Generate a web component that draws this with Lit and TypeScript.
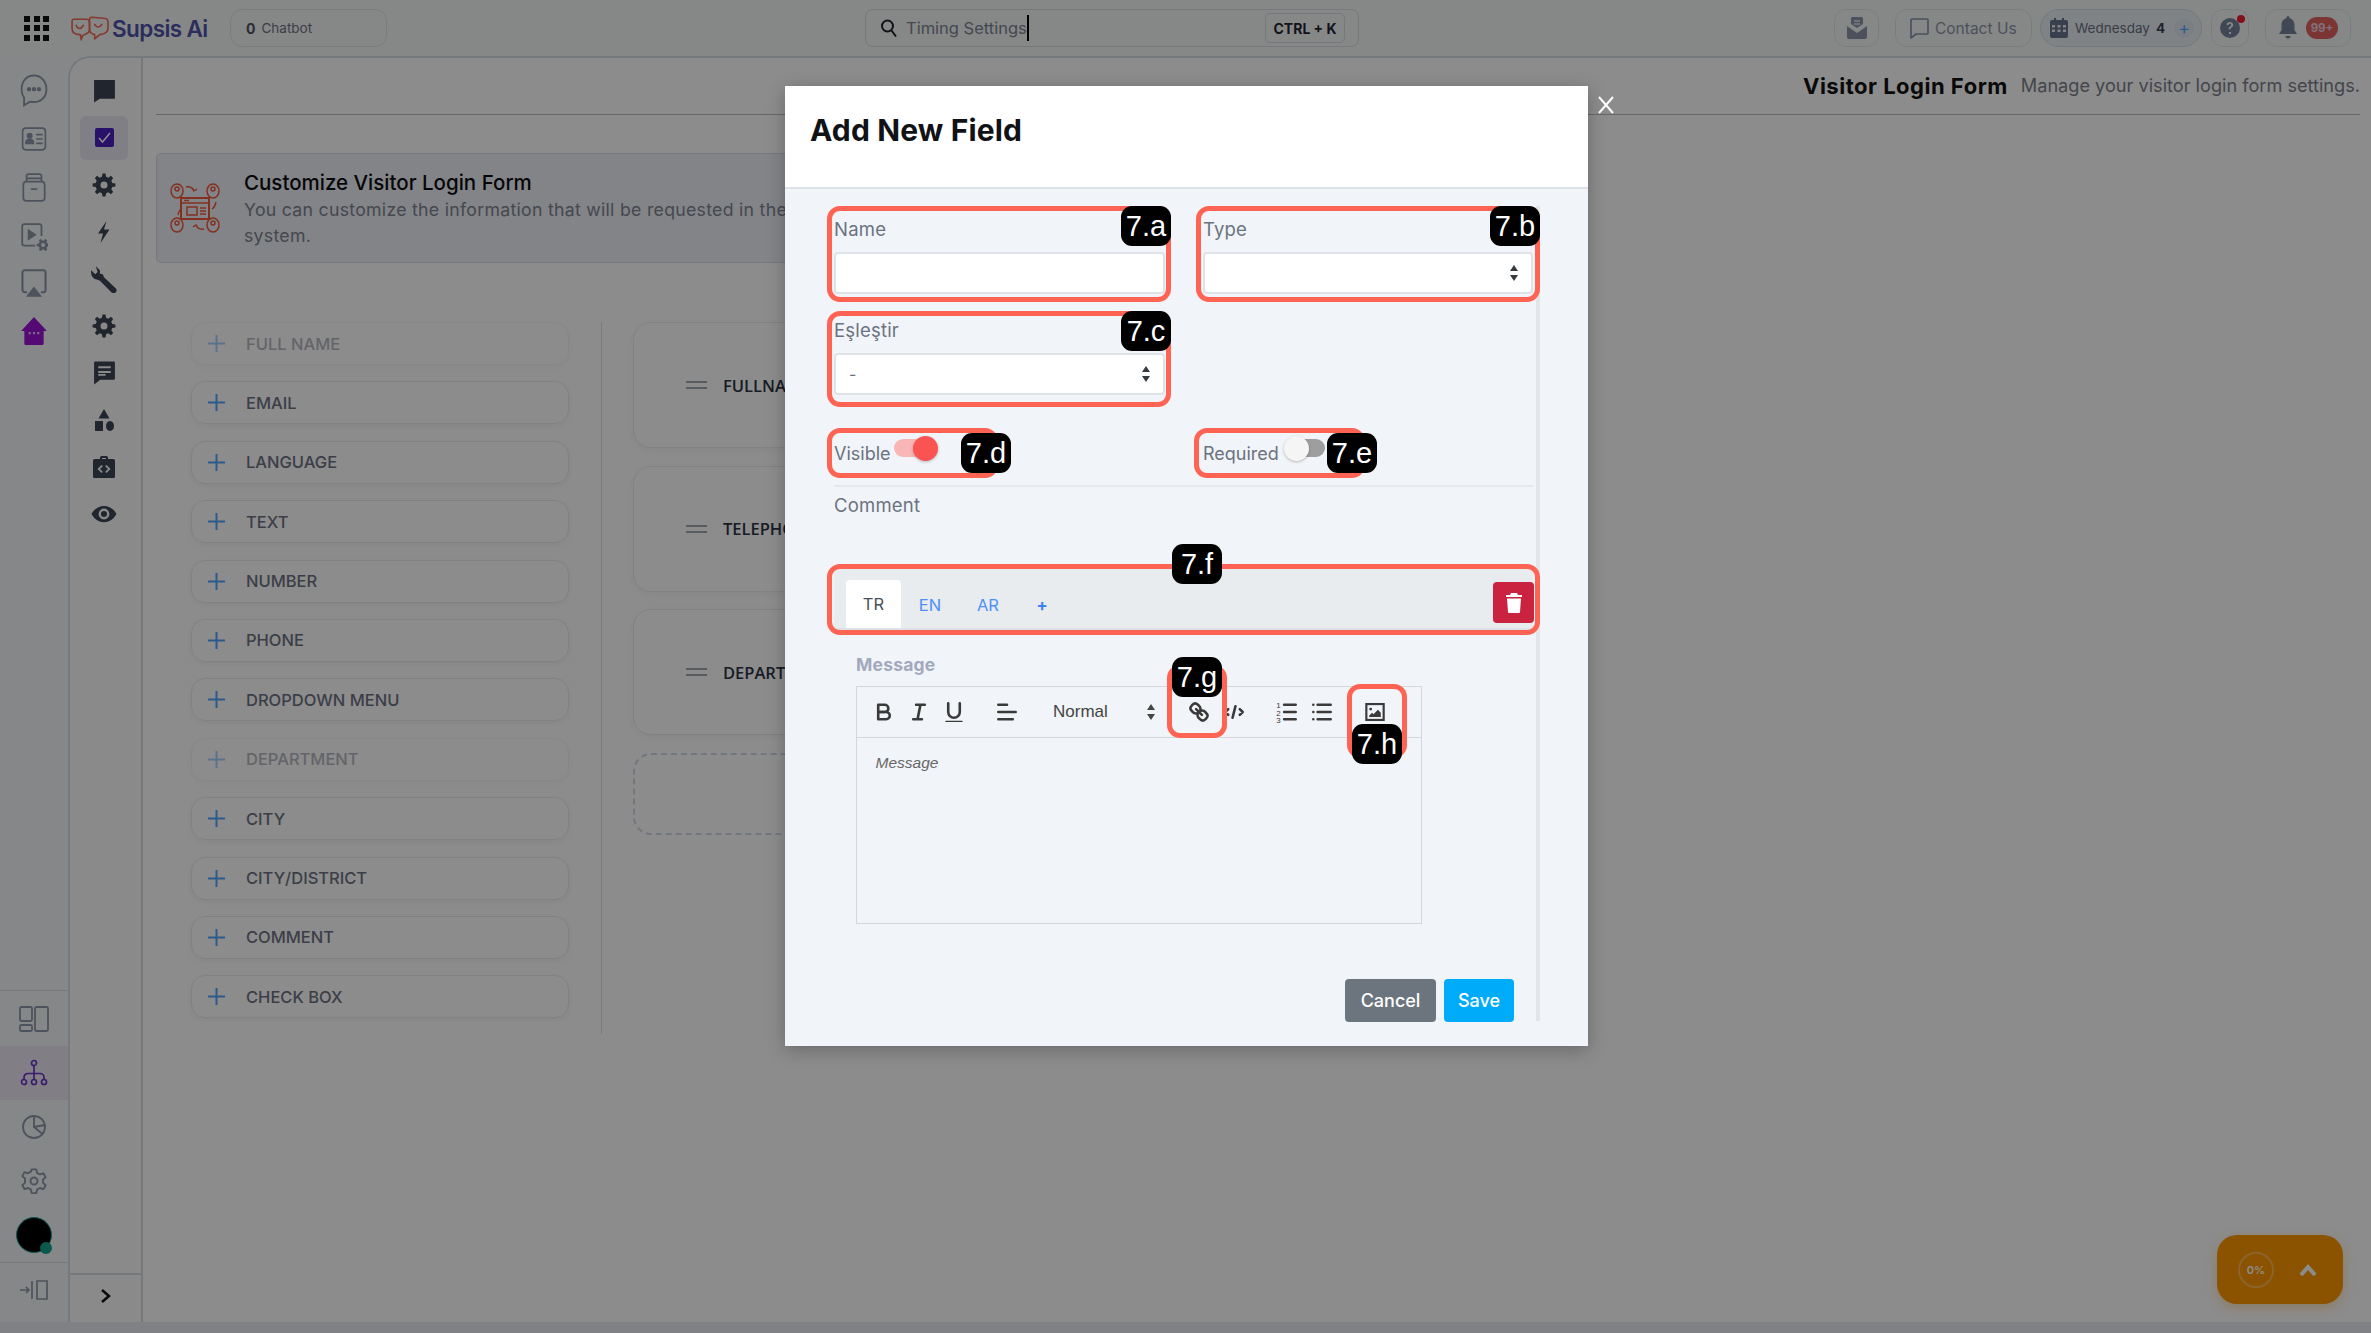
import { LitElement, html, svg, css } from 'lit';
import { customElement } from 'lit/decorators.js';

// builds a filled cog with a round hole, in a 24x24 box
const gearPath = (teeth: number, outer: number, inner: number, hole: number) => {
  const points: string[] = [];
  const step = (Math.PI * 2) / teeth;
  for (let i = 0; i < teeth; i++) {
    const a = i * step;
    [[-0.32, inner], [-0.17, outer], [0.17, outer], [0.32, inner]].forEach(([k, r]) => {
      const angle = a + k * step;
      points.push(`${(12 + r * Math.cos(angle)).toFixed(2)} ${(12 + r * Math.sin(angle)).toFixed(2)}`);
    });
  }
  return `M${points.join('L')}Z M${12 - hole} 12a${hole} ${hole} 0 1 0 ${hole * 2} 0a${hole} ${hole} 0 1 0 ${-hole * 2} 0Z`;
};

const solid = (d: string, size = 24) => html`<svg width=${size} height=${size} viewBox="0 0 24 24" fill="currentColor" fill-rule="evenodd"><path d=${d}></path></svg>`;
const quill = (body: unknown) => html`<svg class="ql" width="26" height="26" viewBox="0 0 18 18" fill="none" stroke="currentColor" stroke-width="1.800" stroke-linecap="round" stroke-linejoin="round">${body}</svg>`;

const stepper = html`<svg class="stepper" width="10" height="18" viewBox="0 0 10 18" fill="currentColor"><path d="M5 1l4 6H1zM5 17l-4-6h8z"></path></svg>`;

const railOneTop = [
  html`<svg width="30" height="36" viewBox="0 0 24 29" fill="none" stroke="currentColor" stroke-width="1.5"><path d="M12 2C6 2 2 6.500 2 13c0 3 1 5.500 2 7v6l5-3c1 .3 2 .4 3 .4 6 0 10-4.400 10-10.400S18 2 12 2z"></path><circle cx="8" cy="13" r="1" fill="currentColor"></circle><circle cx="12" cy="13" r="1" fill="currentColor"></circle><circle cx="16" cy="13" r="1" fill="currentColor"></circle></svg>`,
  html`<svg width="26" height="26" viewBox="0 0 24 24" fill="none" stroke="currentColor" stroke-width="1.500"><rect x="1.500" y="2" width="21" height="20" rx="3"></rect><circle cx="8" cy="9" r="2" fill="currentColor"></circle><path d="M4.500 16c0-5 7-5 7 0z" fill="currentColor"></path><path d="M14 8h6M14 12h6M14 16h6"></path></svg>`,
  html`<svg width="26" height="32" viewBox="0 0 24 30" fill="none" stroke="currentColor" stroke-width="1.600"><path d="M2 13a3 3 0 0 1 3-3h14a3 3 0 0 1 3 3v12a3 3 0 0 1-3 3H5a3 3 0 0 1-3-3z"></path><path d="M5 10V5a2 2 0 0 1 2-2h10a2 2 0 0 1 2 2v5M5 7h14M9 17h6"></path></svg>`,
  html`<svg class="nudge" width="28" height="30" viewBox="0 0 26 28" fill="none" stroke="currentColor" stroke-width="1.700"><path d="M14 22H4a2 2 0 0 1-2-2V4a2 2 0 0 1 2-2h14a2 2 0 0 1 2 2v9"></path><path d="M8 8l6 4-6 4z" fill="currentColor"></path><path d=${gearPath(6, 6, 4.200, 1.800)} transform="translate(9.500 9.500)" fill="currentColor" fill-rule="evenodd" stroke="none"></path></svg>`,
  html`<svg width="28" height="30" viewBox="0 0 24 26" fill="none" stroke="currentColor" stroke-width="1.800"><path d="M6 21H4a2 2 0 0 1-2-2V4a2 2 0 0 1 2-2h16a2 2 0 0 1 2 2v15a2 2 0 0 1-2 2h-2"></path><path d="M12 16l7 9H5z" fill="currentColor" stroke="none"></path></svg>`,
  html`<svg class="house" width="26" height="30" viewBox="0 0 24 28" fill="currentColor"><path d="M12 1l12 13h-3v12a1 1 0 0 1-1 1H4a1 1 0 0 1-1-1V14H0z"></path><path d="M7 16h2M11 16h2M15 16h2" stroke="#d7c7f0" stroke-width="2"></path></svg>`,
];

const railOneBottom = [
  html`<svg width="30" height="28" viewBox="0 0 30 28" fill="none" stroke="currentColor" stroke-width="1.800"><rect x="1" y="2" width="12" height="14" rx="1.500"></rect><rect x="1" y="20" width="12" height="6" rx="1.500"></rect><rect x="16" y="2" width="13" height="24" rx="1.500"></rect></svg>`,
  html`<svg width="28" height="28" viewBox="0 0 28 28" fill="none" stroke="currentColor" stroke-width="1.700"><circle cx="14" cy="4" r="2.500"></circle><circle cx="4" cy="23" r="2.500"></circle><circle cx="14" cy="23" r="2.500"></circle><circle cx="24" cy="23" r="2.500"></circle><path d="M14 6.500v14M4 20.500v-2a4 4 0 0 1 4-4h12a4 4 0 0 1 4 4v2"></path></svg>`,
  html`<svg width="28" height="28" viewBox="0 0 28 28" fill="none" stroke="currentColor" stroke-width="1.800"><circle cx="14" cy="14" r="11"></circle><path d="M14 3v11l8.500 7M14 14l11-2"></path></svg>`,
  html`<svg width="28" height="28" viewBox="0 0 24 24" fill="none" stroke="currentColor" stroke-width="1.600" stroke-linejoin="round"><circle cx="12" cy="12" r="3"></circle><path d="M10 2h4l.6 3 2.500 1.400 2.900-1 2 3.400-2.300 2 .1 2.800 2.200 2-2 3.400-2.900-1-2.500 1.400-.6 3h-4l-.6-3-2.500-1.400-2.900 1-2-3.400 2.300-2V9.800L1.900 7.800l2-3.400 2.900 1 2.500-1.400z"></path></svg>`,
];

const railTwo = [
  solid('M2.500 2h19a.5.5 0 0 1 .5.500v17a.5.5 0 0 1-.5.500H7.500L2 23.500V2.500a.5.5 0 0 1 .5-.500z', 25),
  html`<svg class="check" width="21" height="21" viewBox="0 0 21 21"><rect x="1" y="1" width="19" height="19" rx="2" fill="currentColor"></rect><path d="M5 11l3.500 4L16 6" fill="none" stroke="#fff" stroke-width="1.500"></path></svg>`,
  solid(gearPath(8, 11.500, 8.500, 3.500), 24),
  solid('M14.500 1L6 13.500h5L8.500 23l9-13.500h-5.500z', 24),
  solid('M5 1l3.500 3.500v3L11 8l1 2.500 10 9.500a2.400 2.400 0 0 1-3.500 3.500L8.500 13.500l-2.500-1C2.500 12 .5 9 1 4.500l3.500 3.500 2-2z', 28),
  solid(gearPath(8, 11.500, 8.500, 3.500), 24),
  solid('M3 1.500h18a1 1 0 0 1 1 1V18a1 1 0 0 1-1 1H8l-6 4.500V2.500a1 1 0 0 1 1-1zM6 6v2h12V6zm0 4.500v2h12v-2zM6 15h7v-1.500H6z', 25),
  solid('M12 1l5.500 9.500h-11zM3 13h8v10H3zM18 13c2.500 0 4 2.200 4 5s-1.500 5-4 5-4-2.200-4-5 1.500-5 4-5z', 24),
  solid('M8 4V2.500A1.500 1.500 0 0 1 9.500 1h5A1.500 1.500 0 0 1 16 2.500V4h5.500A1.500 1.500 0 0 1 23 5.500v16a1.500 1.500 0 0 1-1.500 1.500h-19A1.500 1.500 0 0 1 1 21.500v-16A1.500 1.500 0 0 1 2.500 4zm2-1v1h4V3zM9.500 10L5.500 14l4 4 1.300-1.300L8 14l2.800-2.700zm5 0l-1.300 1.300L16 14l-2.800 2.700 1.300 1.300 4-4z', 24),
  solid('M12 4.500C6.500 4.500 2.500 8 .5 12c2 4 6 7.500 11.500 7.500S21.500 16 23.500 12c-2-4-6-7.500-11.500-7.500zM12 7a5 5 0 1 1 0 10 5 5 0 0 1 0-10zm0 2.200a2.800 2.800 0 1 0 0 5.600 2.800 2.800 0 0 0 0-5.600z', 26),
];

const fields = ['FULL NAME', 'EMAIL', 'LANGUAGE', 'TEXT', 'NUMBER', 'PHONE', 'DROPDOWN MENU', 'DEPARTMENT', 'CITY', 'CITY/DISTRICT', 'COMMENT', 'CHECK BOX'];
const usedFields = ['FULL NAME', 'DEPARTMENT'];
const formCards = ['FULLNAME', 'TELEPHONE', 'DEPARTMENT'];

// numbered call-outs laid over the modal, page coordinates minus the modal origin
const modalX = 785;
const modalY = 86;
const callouts = [
  { label: '7.a', box: [827, 206, 344, 96], badge: [1121, 206] },
  { label: '7.b', box: [1196, 206, 344, 96], badge: [1490, 206] },
  { label: '7.c', box: [827, 311, 344, 96], badge: [1121, 311] },
  { label: '7.d', box: [827, 428, 171, 50], badge: [961, 433] },
  { label: '7.e', box: [1194, 428, 171, 50], badge: [1327, 433] },
  { label: '7.f', box: [827, 564, 713, 71], badge: [1172, 544] },
  { label: '7.g', box: [1167, 665, 60, 73], badge: [1172, 657] },
  { label: '7.h', box: [1347, 684, 60, 74], badge: [1352, 724] },
];

const toolbarGroups = [
  [
    quill(svg`<path d="M5,4H9.500A2.500,2.500,0,0,1,12,6.500v0A2.500,2.500,0,0,1,9.500,9H5A0,0,0,0,1,5,9V4A0,0,0,0,1,5,4Z"></path><path d="M5,9h5.500A2.500,2.500,0,0,1,13,11.500v0A2.500,2.500,0,0,1,10.500,14H5a0,0,0,0,1,0,0V9A0,0,0,0,1,5,9Z"></path>`),
    quill(svg`<path d="M7 4h6M5 14h6M8 14l2-10"></path>`),
    quill(svg`<path d="M5,3V9a4.012,4.012,0,0,0,4,4H9a4.012,4.012,0,0,0,4-4V3"></path><rect height="1" rx=".5" width="12" x="3" y="15" fill="currentColor" stroke="none"></rect>`),
  ],
  [quill(svg`<path d="M3 9h12M3 14h10M3 4h6"></path>`)],
];

const toolbarGroupsAfter = [
  [
    quill(svg`<path d="M7 7l4 4"></path><path d="M8.900,4.577a3.476,3.476,0,0,1,.36,4.679A3.476,3.476,0,0,1,4.577,8.900C3.185,7.500,2.035,6.400,4.217,4.217S7.500,3.185,8.900,4.577Z"></path><path d="M13.423,9.100a3.476,3.476,0,0,0-4.679-.36,3.476,3.476,0,0,0,.36,4.679c1.392,1.392,2.500,2.542,4.679.36S14.815,10.500,13.423,9.100Z"></path>`),
    quill(svg`<path d="M5 7L3 9l2 2M13 7l2 2-2 2M10 5L8 13"></path>`),
  ],
  [
    quill(svg`<path d="M7 4h8M7 9h8M7 14h8"></path><text x="1.500" y="6.500" font-size="5.500" fill="currentColor" stroke="none" font-family="Liberation Sans">1</text><text x="1.500" y="11.500" font-size="5.500" fill="currentColor" stroke="none" font-family="Liberation Sans">2</text><text x="1.500" y="16.500" font-size="5.500" fill="currentColor" stroke="none" font-family="Liberation Sans">3</text>`),
    quill(svg`<path d="M6 4h9M6 9h9M6 14h9M3 4h0M3 9h0M3 14h0"></path>`),
  ],
  [
    html`<svg class="ql" width="26" height="26" viewBox="0 0 18 18" fill="none" stroke="currentColor" stroke-width="1.500"><rect height="11" width="12" x="3" y="3.500"></rect><circle cx="6" cy="7" r="1" fill="currentColor" stroke="none"></circle><path d="M5 12.500v-1l2-2 1 1 3-3 2 2v3z" fill="currentColor" stroke="none"></path></svg>`,
  ],
];

@customElement('app-root')
export class AppRoot extends LitElement {
  static styles = css`
    :host {
      display: block;
      width: 2371px;
      height: 1333px;
      position: relative;
      overflow: hidden;
      font-family: Inter, "Liberation Sans", sans-serif;
      color: #6d7282;
    }

    .page {
      display: flex;
      flex-direction: column;
      height: 1333px;
      background: #f5f7f8;
    }

    /* top bar */
    .topbar {
      display: flex;
      align-items: center;
      height: 56px;
      flex: none;
      padding: 0 20px 0 24px;
    }

    .waffle {
      display: grid;
      grid-template-columns: repeat(3, 6px);
      gap: 3.500px;
      width: 25px;
      flex: none;
    }

    .waffle i {
      height: 6px;
      background: #111;
    }

    .logo {
      display: flex;
      align-items: center;
      width: 138px;
      flex: none;
      margin-left: 21px;
    }

    .logo span {
      font-size: 22.500px;
      font-weight: 600;
      color: #4f52a8;
      margin-left: 3px;
      letter-spacing: -0.6px;
    }

    .tool {
      display: flex;
      align-items: center;
      height: 38px;
      box-sizing: border-box;
      border: 1.500px solid #dfe4e9;
      border-radius: 12px;
      flex: none;
    }

    .chatbot {
      width: 157px;
      margin-left: 22px;
      padding-left: 15px;
      font-size: 13.500px;
    }

    .chatbot b {
      font-size: 14px;
      margin-right: 6px;
      color: #4d5360;
    }

    .search {
      width: 494px;
      margin-left: 478px;
      padding: 0 13px 0 14px;
      border-color: #d5dce2;
      border-radius: 8px;
      font-size: 16.500px;
      color: #7d8391;
    }

    .search svg {
      color: #1d2128;
      margin-right: 8px;
    }

    .search .caret {
      width: 2px;
      height: 26px;
      background: #000;
      margin-left: 0;
    }

    .search kbd {
      margin-left: auto;
      width: 80px;
      height: 30px;
      box-sizing: border-box;
      border: 1.500px solid #d5dce2;
      border-radius: 5px;
      display: flex;
      align-items: center;
      justify-content: center;
      font: 700 14px Inter, sans-serif;
      color: #1f2530;
    }

    .right-tools {
      display: flex;
      align-items: center;
      margin-left: auto;
    }

    .mail {
      width: 45px;
      justify-content: center;
      color: #8a94a8;
    }

    .contact {
      width: 137px;
      margin-left: 16px;
      padding-left: 14px;
      font-size: 15.500px;
      color: #8d93a3;
      gap: 6px;
    }

    .contact svg {
      color: #8a94a8;
    }

    .date {
      width: 162px;
      margin-left: 8px;
      padding-left: 9px;
      border-radius: 19px;
      background: #eaeff4;
      border-color: #d3dae2;
      font-size: 13.500px;
      color: #68707f;
    }

    .date svg {
      color: #68758c;
      margin-right: 7px;
    }

    .date b {
      color: #3a4150;
      margin-left: 6px;
    }

    .date .add {
      width: 20px;
      height: 20px;
      margin-left: 9px;
      border-radius: 50%;
      background: #dfe7f0;
      display: flex;
      align-items: center;
      justify-content: center;
      color: #4ea5ff;
      font-size: 17px;
    }

    .help {
      position: relative;
      width: 38px;
      margin-left: 9px;
      justify-content: center;
      color: #76839c;
    }

    .help::after {
      content: "";
      position: absolute;
      left: 25px;
      top: 5px;
      width: 8px;
      height: 8px;
      border-radius: 50%;
      background: #ef1d30;
    }

    .bell {
      width: 86px;
      margin-left: 16px;
      padding-left: 12px;
      color: #76839c;
      gap: 8px;
    }

    .bell span {
      width: 32px;
      height: 22px;
      border-radius: 11px;
      background: #e0635e;
      color: #ecd;
      font-size: 11.500px;
      font-weight: 700;
      display: flex;
      align-items: center;
      justify-content: center;
    }

    /* left rails */
    .main {
      display: flex;
      flex: 1;
      min-height: 0;
    }

    .rail-one {
      width: 68px;
      flex: none;
      display: flex;
      flex-direction: column;
      background: #f3f6f9;
      color: #8d97a8;
    }

    .rail-one .upper {
      padding-top: 11px;
    }

    .rail-one .slot {
      height: 48px;
      display: flex;
      align-items: center;
      justify-content: center;
    }

    .rail-one .slot svg.house {
      color: #9a12d4;
    }

    .rail-one .slot svg.nudge {
      margin-top: 4px;
    }

    .rail-one .lower {
      margin-top: auto;
      border-top: 1.500px solid #d5dce2;
    }

    .rail-one .lower .slot {
      height: 54px;
    }

    .rail-one .lower .slot:first-child {
      height: 55px;
    }

    .rail-one .lower .slot.active {
      background: #ece6f5;
      color: #6a35c9;
    }

    .avatar {
      position: relative;
      width: 36px;
      height: 36px;
      border-radius: 50%;
      background: #000;
      border: 1px solid #12a594;
      box-sizing: border-box;
    }

    .avatar::after {
      content: "";
      position: absolute;
      right: -1px;
      bottom: -2px;
      width: 12px;
      height: 12px;
      border-radius: 50%;
      background: #14a08e;
    }

    .rail-one .exit {
      height: 60px;
      border-top: 1.500px solid #d5dce2;
      display: flex;
      justify-content: center;
      padding-top: 16px;
      box-sizing: border-box;
    }

    .workspace {
      flex: 1;
      display: flex;
      min-width: 0;
      border-top: 2px solid #d5dce2;
      border-left: 2px solid #d5dce2;
      border-top-left-radius: 22px;
      background: #fff;
      overflow: hidden;
    }

    .rail-two {
      width: 71px;
      flex: none;
      display: flex;
      flex-direction: column;
      background: #fcfcfd;
      border-right: 2px solid #d5dce2;
      color: #3d4554;
    }

    .rail-two .items {
      padding: 10.500px 0 0 10px;
      display: flex;
      flex-direction: column;
      gap: 3px;
    }

    .rail-two .item {
      width: 48px;
      height: 44px;
      border-radius: 6px;
      display: flex;
      align-items: center;
      justify-content: center;
    }

    .rail-two .item.active {
      background: #ece7f4;
      color: #4a1fc0;
    }

    .rail-two .collapse {
      margin-top: auto;
      height: 49px;
      box-sizing: border-box;
      padding-bottom: 6px;
      border-top: 2px solid #d5dce2;
      display: flex;
      align-items: center;
      justify-content: center;
      color: #111;
    }

    /* page content */
    .content {
      flex: 1;
      min-width: 0;
      padding: 0 11px 0 13px;
    }

    .title-row {
      height: 57px;
      box-sizing: border-box;
      display: flex;
      align-items: center;
      justify-content: flex-end;
      border-bottom: 1.500px solid #b8bec4;
      gap: 13px;
    }

    .title-row h1 {
      margin: 0;
      font-size: 22px;
      font-weight: 700;
      color: #111;
      letter-spacing: 0.5px;
    }

    .title-row p {
      margin: -2px 0 0;
      font-size: 18.150px;
      color: #7b7f8a;
    }

    .info {
      display: flex;
      align-items: center;
      width: 1000px;
      height: 110px;
      box-sizing: border-box;
      margin-top: 38px;
      padding-left: 12px;
      background: #eef1f6;
      border: 1.500px solid #d3dae2;
      border-radius: 5px;
    }

    .info .art {
      flex: none;
      color: #f0583d;
      margin-right: 23px;
    }

    .info-text {
      padding-top: 3px;
    }

    .info h2 {
      margin: 0 0 2px;
      font-size: 20.500px;
      line-height: 25px;
      font-weight: 500;
      color: #0c0c10;
    }

    .info p {
      margin: 0;
      font-size: 17.700px;
      letter-spacing: 0.28px;
      line-height: 26px;
      color: #7d8391;
    }

    .builder {
      display: flex;
      margin-top: 59px;
      padding-left: 35px;
    }

    .field-list {
      width: 378px;
      height: 694px;
      padding: 0 32px 18px 0;
      border-right: 1.500px solid #dde1e5;
      display: flex;
      flex-direction: column;
      gap: 16.400px;
    }

    .field-item {
      height: 43px;
      flex: none;
      box-sizing: border-box;
      display: flex;
      align-items: center;
      border: 1.500px solid #e8ecee;
      border-radius: 14px;
      box-shadow: 0 2px 5px rgba(0, 0, 0, 0.05);
      padding-left: 16px;
      font-size: 16.500px;
      font-weight: 500;
    }

    .field-item.used {
      opacity: 0.5;
    }

    .field-item svg {
      color: #4ea5ff;
      margin-right: 21px;
    }

    .form-cards {
      width: 600px;
      margin-left: 31px;
      display: flex;
      flex-direction: column;
      gap: 17.500px;
    }

    .form-card {
      height: 126px;
      box-sizing: border-box;
      display: flex;
      align-items: center;
      border: 1.500px solid #e8ecee;
      border-radius: 18px;
      box-shadow: 0 2px 6px rgba(0, 0, 0, 0.05);
      padding-left: 52px;
      font: 600 16.500px "Open Sans", sans-serif;
      color: #2a3344;
    }

    .form-card i {
      width: 21px;
      height: 8px;
      margin-right: 16px;
      border-top: 2.500px solid #a3a8ae;
      border-bottom: 2.500px solid #a3a8ae;
      box-sizing: border-box;
    }

    .form-dropzone {
      height: 82px;
      box-sizing: border-box;
      border: 2px dashed #cfd9e8;
      border-radius: 18px;
    }

    .strip {
      height: 11px;
      flex: none;
      background: #e9ebf0;
    }

    .progress {
      position: absolute;
      left: 2217px;
      top: 1235px;
      width: 126px;
      height: 69px;
      border-radius: 20px;
      background: #fd9700;
      display: flex;
      align-items: center;
      padding-left: 21px;
      box-sizing: border-box;
      color: #fff;
      box-shadow: 0 4px 12px rgba(253, 151, 0, 0.3);
    }

    .progress .ring {
      width: 36px;
      height: 36px;
      box-sizing: border-box;
      border: 2.500px solid #ffb54a;
      border-radius: 50%;
      display: flex;
      align-items: center;
      justify-content: center;
      font-size: 11px;
      font-weight: 600;
      margin-right: 25px;
    }

    /* dimmed layer and modal */
    .backdrop {
      position: absolute;
      inset: 0;
      background: rgba(0, 0, 0, 0.45);
    }

    .close {
      position: absolute;
      left: 1598px;
      top: 96px;
      color: #fff;
    }

    .modal {
      position: absolute;
      left: 785px;
      top: 86px;
      width: 803px;
      height: 960px;
      background: #f1f4f8;
      border-radius: 4px 4px 0 0;
      box-shadow: 0 4px 18px rgba(0, 0, 0, 0.25);
      color: #6b7280;
    }

    .modal-head {
      height: 103px;
      box-sizing: border-box;
      background: #fff;
      border-bottom: 2px solid #dce2e8;
      display: flex;
      align-items: center;
      padding: 0 0 13px 25px;
    }

    .modal-head h3 {
      margin: 0;
      font-size: 30px;
      font-weight: 700;
      color: #101216;
      letter-spacing: 0.15px;
    }

    .modal-body {
      width: 706px;
      height: 815px;
      margin: 17px 0 0 49px;
      padding: 10px 3px 0 0;
      box-sizing: border-box;
      border-right: 4px solid #e3e6e9;
    }

    .form-grid {
      display: grid;
      grid-template-columns: 331px 330px;
      column-gap: 38px;
      row-gap: 23px;
    }

    .label {
      font-size: 18.500px;
      letter-spacing: 0.2px;
      line-height: 26px;
      height: 26px;
    }

    .control {
      height: 42px;
      margin-top: 10px;
      box-sizing: border-box;
      background: #fff;
      border: 2px solid #dfe3e8;
      border-radius: 4px;
      display: flex;
      align-items: center;
      justify-content: space-between;
      padding: 0 12px 0 13px;
      color: #6b7280;
    }

    .stepper {
      color: #343a40;
    }

    .toggles {
      display: grid;
      grid-template-columns: 331px 330px;
      column-gap: 38px;
      margin-top: 46px;
    }

    .toggle-field {
      display: flex;
    }

    .toggle-field .label {
      width: 60px;
      font-size: 18px;
      letter-spacing: 0;
    }

    .toggle-field.required .label {
      width: 84px;
    }

    .toggle {
      position: relative;
      width: 38px;
      height: 18px;
      margin-top: -2px;
      border-radius: 9px;
      background: #f9b6b6;
    }

    .toggle::after {
      content: "";
      position: absolute;
      left: 19px;
      top: -3px;
      width: 25px;
      height: 25px;
      border-radius: 50%;
      background: #fb5252;
      box-shadow: 0 1px 3px rgba(0, 0, 0, 0.25);
    }

    .toggle.off {
      background: #9e9e9e;
    }

    .toggle.off::after {
      left: -3px;
      background: #f5f5f5;
    }

    .rule {
      height: 2px;
      margin-top: 18px;
      background: #e6e9ec;
    }

    .comment {
      margin-top: 5px;
    }

    .tabs {
      display: flex;
      align-items: flex-end;
      height: 61px;
      box-sizing: border-box;
      margin-top: 51px;
      padding-left: 12px;
      background: #e9ecef;
      border-bottom: 2px solid #dee2e6;
      font-size: 16.500px;
      color: #4f8ff7;
    }

    .tab {
      height: 46px;
      display: flex;
      align-items: center;
      justify-content: center;
      padding-bottom: 1px;
      width: 58px;
      box-sizing: border-box;
    }

    .tab.active {
      width: 55px;
      color: #495057;
      background: #fff;
      border-radius: 4px 4px 0 0;
      height: 48px;
    }

    .tab.more {
      width: 50px;
      font-weight: 700;
      color: #3b82f6;
    }

    .trash {
      width: 41px;
      height: 41px;
      margin: 0 -1px 5px auto;
      border-radius: 4px;
      background: #c9233f;
      color: #fff;
      display: flex;
      align-items: center;
      justify-content: center;
    }

    .message {
      padding: 22px 0 0 22px;
    }

    .message-label {
      font-size: 17.500px;
      letter-spacing: 0.2px;
      line-height: 26px;
      font-weight: 700;
      color: #a3a9bd;
    }

    .editor {
      width: 566px;
      height: 238px;
      margin-top: 8px;
      box-sizing: border-box;
      border: 1.500px solid #d3d6da;
    }

    .ql-toolbar {
      height: 50px;
      box-sizing: content-box;
      border-bottom: 1.500px solid #d3d6da;
      display: flex;
      align-items: center;
      padding-left: 9px;
      color: #3a3a3a;
    }

    .ql-group {
      display: flex;
      margin-right: 18px;
    }

    .ql-button {
      width: 35px;
      display: flex;
      justify-content: center;
    }

    .ql-picker {
      width: 121px;
      margin-right: 18px;
      box-sizing: border-box;
      padding: 0 7px 0 11px;
      display: flex;
      align-items: center;
      justify-content: space-between;
      font: 17px "Liberation Sans", sans-serif;
      color: #444;
    }

    .ql-picker .stepper {
      color: #444;
    }

    .ql-placeholder {
      padding: 16px 18.500px;
      font: italic 15.500px "Liberation Sans", sans-serif;
      color: #666;
    }

    .actions {
      display: flex;
      justify-content: flex-end;
      gap: 8px;
      margin: 55px 19px 0 0;
    }

    .actions button {
      height: 43px;
      border: none;
      border-radius: 4px;
      color: #fff;
      font: 500 18px Inter, sans-serif;
      padding: 0;
    }

    .cancel {
      width: 91px;
      background: #6c757d;
    }

    .save {
      width: 70px;
      background: #00abf9;
    }

    /* numbered call-outs */
    .callout {
      position: absolute;
      box-sizing: border-box;
      border: 5px solid #ff6353;
      border-radius: 13px;
    }

    .badge {
      position: absolute;
      width: 50px;
      height: 40px;
      border-radius: 11px;
      background: #000;
      color: #fff;
      font: 29px "Liberation Sans", sans-serif;
      display: flex;
      align-items: center;
      justify-content: center;
    }
  `;

  renderTopbar() {
    return html`
      <header class="topbar">
        <div class="waffle">${Array.from({ length: 9 }, () => html`<i></i>`)}</div>
        <div class="logo">
          <svg width="39" height="29" viewBox="0 0 38 26" fill="none" stroke="#ef6a52" stroke-width="1.600" stroke-linejoin="round" stroke-linecap="round">
            <path d="M4 4h12q3 0 3 3v7q0 3-3 4l-4 2-1 4-1-5q-8 0-8-6V6q0-2 2-2z"></path>
            <path d="M21 2l12 1q4 0 4 4v6q0 5-8 6l-5 4 0-4q-5-1-5-6V5q0-3 2-3z"></path>
            <path d="M6 10q3 6 7 0M24 9q3 5 7 0"></path>
          </svg>
          <span>Supsis Ai</span>
        </div>
        <div class="tool chatbot"><b>0</b>Chatbot</div>
        <div class="tool search">
          <svg width="18" height="20" viewBox="0 0 18 20" fill="none" stroke="currentColor" stroke-width="2"><circle cx="7.500" cy="8" r="5.500"></circle><path d="M11.500 12.500l4.500 6"></path></svg>
          <span>Timing Settings</span><span class="caret"></span>
          <kbd>CTRL + K</kbd>
        </div>
        <div class="right-tools">
          <div class="tool mail">
            <svg width="22" height="24" viewBox="0 0 22 24" fill="currentColor"><path d="M5 8V2.500A1.500 1.500 0 0 1 6.500 1h9A1.500 1.500 0 0 1 17 2.500V8l-6 4z"></path><path d="M1 10l10 7 10-7v11a2 2 0 0 1-2 2H3a2 2 0 0 1-2-2z"></path><path d="M8 5h6M8 8h6" stroke="#dfe3ea" stroke-width="1.400"></path></svg>
          </div>
          <div class="tool contact">
            <svg width="19" height="22" viewBox="0 0 19 22" fill="none" stroke="currentColor" stroke-width="1.700" stroke-linejoin="round"><path d="M2 2h15a1 1 0 0 1 1 1v13a1 1 0 0 1-1 1H6l-5 4V3a1 1 0 0 1 1-1z"></path></svg>
            Contact Us
          </div>
          <div class="tool date">
            <svg width="18" height="20" viewBox="0 0 18 20" fill="currentColor" fill-rule="evenodd"><path d="M4 0h2v2h6V0h2v2h2a2 2 0 0 1 2 2v14a2 2 0 0 1-2 2H2a2 2 0 0 1-2-2V4a2 2 0 0 1 2-2h2zM2 7v2.500h3V7zm5.500 0v2.500h3V7zM13 7v2.500h3V7zM2 11.500V14h3v-2.500zm5.500 0V14h3v-2.500zm5.500 0V14h3v-2.500z"></path></svg>
            Wednesday<b>4</b><span class="add">+</span>
          </div>
          <div class="tool help">
            <svg width="20" height="24" viewBox="0 0 20 24" fill="currentColor" fill-rule="evenodd"><path d="M10 2a10 10 0 0 1 0 20 10 10 0 0 1 0-20zM9 16v2h2v-2zm1-10c-2 0-3.300 1-3.500 3h2c.1-.8.600-1.200 1.400-1.200s1.300.4 1.300 1.100c0 1.500-2.700 1.600-2.700 4.400h2c0-1.900 2.700-2 2.700-4.500C12.700 7 11.600 6 10 6z"></path></svg>
          </div>
          <div class="tool bell">
            <svg width="20" height="26" viewBox="0 0 20 26" fill="currentColor"><path d="M10 1a1.500 1.500 0 0 1 1.500 1.500v.8C15 4 16.500 7 16.500 10v5l2.500 4H1l2.500-4v-5C3.500 7 5 4 8.500 3.300v-.8A1.500 1.500 0 0 1 10 1zM7.500 21h5a2.500 2.500 0 0 1-5 0z"></path></svg>
            <span>99+</span>
          </div>
        </div>
      </header>
    `;
  }

  renderRails() {
    return html`
      <aside class="rail-one">
        <div class="upper">${railOneTop.map(icon => html`<div class="slot">${icon}</div>`)}</div>
        <div class="lower">
          ${railOneBottom.map((icon, i) => html`<div class="slot ${i === 1 ? 'active' : ''}">${icon}</div>`)}
          <div class="slot"><div class="avatar"></div></div>
          <div class="exit">
            <svg width="30" height="22" viewBox="0 0 30 22" fill="none" stroke="currentColor" stroke-width="1.700"><path d="M1 11h9M7 8l3 3-3 3M13 2v18M18 2h10v18H18z"></path></svg>
          </div>
        </div>
      </aside>
    `;
  }

  renderRailTwo() {
    return html`
      <aside class="rail-two">
        <div class="items">
          ${railTwo.map((icon, i) => html`<div class="item ${i === 1 ? 'active' : ''}">${icon}</div>`)}
        </div>
        <div class="collapse">
          <svg width="12" height="14" viewBox="0 0 12 14" fill="none" stroke="currentColor" stroke-width="2.500"><path d="M2 1l7 6-7 6"></path></svg>
        </div>
      </aside>
    `;
  }

  renderContent() {
    return html`
      <main class="content">
        <div class="title-row">
          <h1>Visitor Login Form</h1>
          <p>Manage your visitor login form settings.</p>
        </div>
        <section class="info">
          <svg class="art" width="52" height="52" viewBox="0 0 52 52" fill="none" stroke="currentColor" stroke-width="1.500">
            <ellipse cx="8" cy="9" rx="6" ry="7"></ellipse><ellipse cx="44" cy="9" rx="6" ry="7"></ellipse>
            <ellipse cx="8" cy="43" rx="6" ry="7"></ellipse><ellipse cx="44" cy="43" rx="6" ry="7"></ellipse>
            <circle cx="8" cy="7" r="2"></circle><circle cx="44" cy="7" r="2"></circle><circle cx="8" cy="41" r="2"></circle><circle cx="44" cy="41" r="2"></circle>
            <rect x="12" y="16" width="28" height="21" stroke-width="2"></rect>
            <path d="M12 21h28M15 18.500h5M18 25h10v8H18zM31 26h6M31 29h6M31 32h6"></path>
            <path d="M17 5q6-1 8 4M23 6l2 3 3-2M35 47q-6 1-8-4M29 46l-2-3-3 2M9 33q1-5 4-7M47 20q-1 5-4 7"></path>
          </svg>
          <div class="info-text">
            <h2>Customize Visitor Login Form</h2>
            <p>You can customize the information that will be requested in the visitor login form on the<br />system.</p>
          </div>
        </section>
        <section class="builder">
          <div class="field-list">
            ${fields.map(name => html`
              <div class="field-item ${usedFields.includes(name) ? 'used' : ''}">
                <svg width="17" height="17" viewBox="0 0 17 17" stroke="currentColor" stroke-width="2"><path d="M8.500 0v17M0 8.500h17"></path></svg>
                ${name}
              </div>
            `)}
          </div>
          <div class="form-cards">
            ${formCards.map(name => html`<div class="form-card"><i></i>${name}</div>`)}
            <div class="form-dropzone"></div>
          </div>
        </section>
      </main>
    `;
  }

  renderModal() {
    return html`
      <div class="modal">
        <div class="modal-head"><h3>Add New Field</h3></div>
        <div class="modal-body">
          <div class="form-grid">
            <div><div class="label">Name</div><div class="control"></div></div>
            <div><div class="label">Type</div><div class="control"><span></span>${stepper}</div></div>
            <div><div class="label">Eşleştir</div><div class="control"><span>-</span>${stepper}</div></div>
          </div>
          <div class="toggles">
            <div class="toggle-field"><div class="label">Visible</div><div class="toggle"></div></div>
            <div class="toggle-field required"><div class="label">Required</div><div class="toggle off"></div></div>
          </div>
          <div class="rule"></div>
          <div class="label comment">Comment</div>
          <div class="tabs">
            <div class="tab active">TR</div>
            <div class="tab">EN</div>
            <div class="tab">AR</div>
            <div class="tab more">+</div>
            <div class="trash">
              <svg width="16" height="20" viewBox="0 0 16 20" fill="currentColor"><path d="M5 0h6l1 2h4v2H0V2h4zM1 5.500h14L14 19a1 1 0 0 1-1 1H3a1 1 0 0 1-1-1z"></path></svg>
            </div>
          </div>
          <div class="message">
            <div class="message-label">Message</div>
            <div class="editor">
              <div class="ql-toolbar">
                ${toolbarGroups.map(group => html`<div class="ql-group">${group.map(icon => html`<span class="ql-button">${icon}</span>`)}</div>`)}
                <div class="ql-picker"><span>Normal</span>${stepper}</div>
                ${toolbarGroupsAfter.map(group => html`<div class="ql-group">${group.map(icon => html`<span class="ql-button">${icon}</span>`)}</div>`)}
              </div>
              <div class="ql-placeholder">Message</div>
            </div>
          </div>
          <div class="actions">
            <button class="cancel">Cancel</button>
            <button class="save">Save</button>
          </div>
        </div>
        ${callouts.map(({ box }) => html`<div class="callout" style="left:${box[0] - modalX}px;top:${box[1] - modalY}px;width:${box[2]}px;height:${box[3]}px"></div>`)}
        ${callouts.map(({ label, badge }) => html`<div class="badge" style="left:${badge[0] - modalX}px;top:${badge[1] - modalY}px">${label}</div>`)}
      </div>
    `;
  }

  render() {
    return html`
      <div class="page">
        ${this.renderTopbar()}
        <div class="main">
          ${this.renderRails()}
          <div class="workspace">
            ${this.renderRailTwo()}
            ${this.renderContent()}
          </div>
        </div>
        <div class="strip"></div>
      </div>
      <div class="progress">
        <div class="ring">0%</div>
        <svg width="18" height="14" viewBox="0 0 18 14" fill="none" stroke="currentColor" stroke-width="4"><path d="M2 12l7-8 7 8"></path></svg>
      </div>
      <div class="backdrop"></div>
      <svg class="close" width="16" height="18" viewBox="0 0 16 18" fill="none" stroke="currentColor" stroke-width="2"><path d="M1 1l14 16M15 1L1 17"></path></svg>
      ${this.renderModal()}
    `;
  }
}
